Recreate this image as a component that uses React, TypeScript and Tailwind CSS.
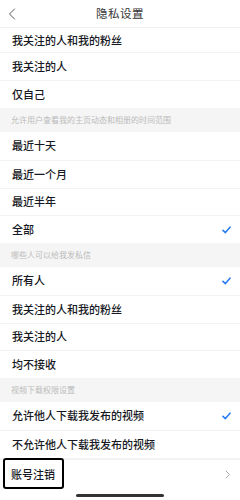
const font = { fontFamily: '"Noto Sans CJK SC", "Noto Sans", sans-serif' };

function Check() {
  return (
    <svg width="9" height="8" viewBox="0 0 9 8" fill="none">
      <path d="M1 4.4 L3.4 6.6 L8 1.2" stroke="#2a7cf5" strokeWidth="1.6" strokeLinecap="round" strokeLinejoin="round" />
    </svg>
  );
}

function Row({ label, checked, first, h = "h-[27.75px]" }: { label: string; checked?: boolean; first?: boolean; h?: string }) {
  return (
    <div className={`flex items-center justify-between pl-3 pr-[9px] bg-white ${h} ${first ? "" : "border-t border-[#f3f3f3]"}`}>
      <span className="text-[11px] font-medium leading-none text-[#161823]">{label}</span>
      {checked && <Check />}
    </div>
  );
}

function Section({ title }: { title: string }) {
  return (
    <div className="flex h-[24px] items-center bg-[#f5f5f5] px-[11px]">
      <span className="text-[8px] leading-none text-[#bbbbbb]">{title}</span>
    </div>
  );
}

export default function App() {
  return (
    <div className="flex h-[500px] w-[240px] flex-col overflow-hidden bg-white" style={font}>
      {/* nav bar */}
      <div className="relative flex h-[28px] items-center justify-center border-b border-[#f0f0f0]">
        <svg className="absolute left-[8px] top-[8px]" width="8" height="12" viewBox="0 0 8 12" fill="none">
          <path d="M6.5 1 L1.5 6 L6.5 11" stroke="#555" strokeWidth="1" strokeLinecap="round" strokeLinejoin="round" />
        </svg>
        <span className="text-[11.5px] tracking-[0.5px] text-[#333]">隐私设置</span>
      </div>

      <Row label="我关注的人和我的粉丝" first h="h-[24px]" />
      <Row label="我关注的人" h="h-[28px]" />
      <Row label="仅自己" h="h-[28px]" />

      <Section title="允许用户查看我的主页动态和相册的时间范围" />
      <Row label="最近十天" first />
      <Row label="最近一个月" />
      <Row label="最近半年" />
      <Row label="全部" checked />

      <Section title="哪些人可以给我发私信" />
      <Row label="所有人" checked first />
      <Row label="我关注的人和我的粉丝" />
      <Row label="我关注的人" />
      <Row label="均不接收" />

      <Section title="视频下载权限设置" />
      <Row label="允许他人下载我发布的视频" checked first />
      <Row label="不允许他人下载我发布的视频" />

      <div className="h-[2.5px] bg-[#f3f3f3]" />

      <div className="relative flex h-[29px] items-center justify-between pl-[11px] pr-[9px]">
        <span className="text-[11px] font-medium leading-none text-[#161823]">账号注销</span>
        <svg width="6" height="9" viewBox="0 0 6 9" fill="none">
          <path d="M1 1 L4.5 4.5 L1 8" stroke="#aaa" strokeWidth="1" strokeLinecap="round" strokeLinejoin="round" />
        </svg>
        <div className="absolute left-[3px] top-[-2px] h-[31px] w-[61px] rounded-[3px] border-2 border-black" />
      </div>

      <div className="flex flex-1 items-end justify-center pb-[3px]">
        <div className="h-[3px] w-[88px] rounded-full bg-[#333]" />
      </div>
    </div>
  );
}
